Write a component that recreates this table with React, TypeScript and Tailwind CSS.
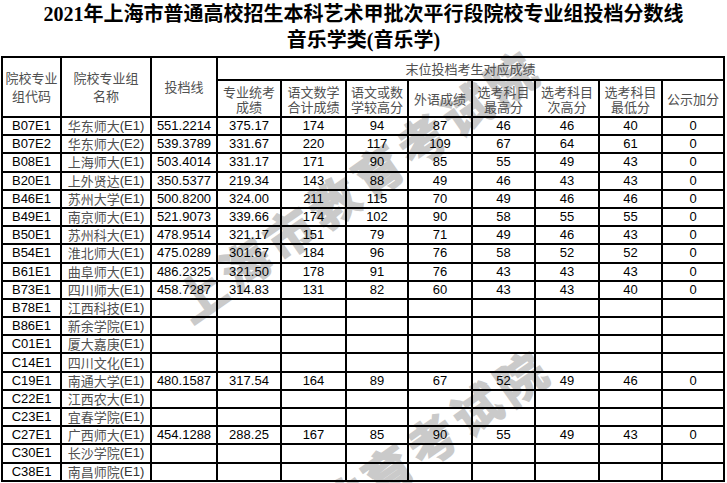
const CJK = '"Noto Sans CJK SC", sans-serif';

type Row = {
  code: string;
  school: string;
  group: string;
  scores?: string[];
};

const rows: Row[] = [
  { code: "B07E1", school: "华东师大", group: "E1", scores: ["551.2214", "375.17", "174", "94", "87", "46", "46", "40", "0"] },
  { code: "B07E2", school: "华东师大", group: "E2", scores: ["539.3789", "331.67", "220", "117", "109", "67", "64", "61", "0"] },
  { code: "B08E1", school: "上海师大", group: "E1", scores: ["503.4014", "331.17", "171", "90", "85", "55", "49", "43", "0"] },
  { code: "B20E1", school: "上外贤达", group: "E1", scores: ["350.5377", "219.34", "143", "88", "49", "46", "43", "43", "0"] },
  { code: "B46E1", school: "苏州大学", group: "E1", scores: ["500.8200", "324.00", "211", "115", "70", "49", "46", "46", "0"] },
  { code: "B49E1", school: "南京师大", group: "E1", scores: ["521.9073", "339.66", "174", "102", "90", "58", "55", "55", "0"] },
  { code: "B50E1", school: "苏州科大", group: "E1", scores: ["478.9514", "321.17", "151", "79", "71", "49", "46", "43", "0"] },
  { code: "B54E1", school: "淮北师大", group: "E1", scores: ["475.0289", "301.67", "184", "96", "76", "58", "52", "52", "0"] },
  { code: "B61E1", school: "曲阜师大", group: "E1", scores: ["486.2325", "321.50", "178", "91", "76", "43", "43", "43", "0"] },
  { code: "B73E1", school: "四川师大", group: "E1", scores: ["458.7287", "314.83", "131", "82", "60", "43", "43", "40", "0"] },
  { code: "B78E1", school: "江西科技", group: "E1" },
  { code: "B86E1", school: "新余学院", group: "E1" },
  { code: "C01E1", school: "厦大嘉庚", group: "E1" },
  { code: "C14E1", school: "四川文化", group: "E1" },
  { code: "C19E1", school: "南通大学", group: "E1", scores: ["480.1587", "317.54", "164", "89", "67", "52", "49", "46", "0"] },
  { code: "C22E1", school: "江西农大", group: "E1" },
  { code: "C23E1", school: "宜春学院", group: "E1" },
  { code: "C27E1", school: "广西师大", group: "E1", scores: ["454.1288", "288.25", "167", "85", "90", "55", "49", "43", "0"] },
  { code: "C30E1", school: "长沙学院", group: "E1" },
  { code: "C38E1", school: "南昌师院", group: "E1" },
];

const subHeads = [
  ["专业统考", "成绩"],
  ["语文数学", "合计成绩"],
  ["语文或数", "学较高分"],
  ["外语成绩"],
  ["选考科目", "最高分"],
  ["选考科目", "次高分"],
  ["选考科目", "最低分"],
  ["公示加分"],
];

function Watermarks() {
  return (
    <>
      <div
        className="absolute left-[180px] top-[283px] origin-[0_50%] rotate-[-35deg] whitespace-nowrap text-[48px] leading-[48px] font-bold tracking-[6px] text-[#cacaca] [-webkit-text-stroke:2px_#cacaca]"
        style={{ fontFamily: CJK }}
      >
        上海市教育考试院
      </div>
      <div
        className="absolute left-[190px] top-[583px] origin-[0_50%] rotate-[-35deg] whitespace-nowrap text-[48px] leading-[48px] font-bold tracking-[6px] text-[#cacaca] [-webkit-text-stroke:2px_#cacaca]"
        style={{ fontFamily: CJK }}
      >
        上海市教育考试院
      </div>
    </>
  );
}

function Cell({ children }: { children?: React.ReactNode }) {
  return <div className="flex h-[14px] items-center justify-center whitespace-nowrap">{children}</div>;
}

export default function App() {
  const cell = "border-2 border-black p-0 text-center align-middle";

  return (
    <div
      className="relative h-[483px] w-[727px] overflow-hidden bg-white text-black"
      style={{ fontFamily: '"Liberation Sans", "Noto Sans CJK SC", sans-serif' }}
    >
      <Watermarks />

      {/* Title */}
      <div
        className="relative pt-[1px] text-center text-[20px] font-bold leading-[26px]"
        style={{ fontFamily: '"Liberation Serif", "Noto Sans CJK SC", serif' }}
      >
        <div>2021年上海市普通高校招生本科艺术甲批次平行段院校专业组投档分数线</div>
        <div>音乐学类(音乐学)</div>
      </div>

      {/* Score table */}
      <table className="relative mt-[3px] ml-[1px] w-[724px] table-fixed border-collapse text-[13px]">
        <colgroup>
          <col className="w-[59px]" />
          <col className="w-[90px]" />
          <col className="w-[66px]" />
          <col className="w-[64px]" />
          <col className="w-[65px]" />
          <col className="w-[62px]" />
          <col className="w-[64px]" />
          <col className="w-[63px]" />
          <col className="w-[64px]" />
          <col className="w-[63px]" />
          <col className="w-[62px]" />
        </colgroup>
        <thead className="text-[#505050]" style={{ fontFamily: CJK }}>
          <tr className="h-[23px]">
            <th rowSpan={2} className={`${cell} font-normal leading-[18px]`}>
              院校专业
              <br />
              组代码
            </th>
            <th rowSpan={2} className={`${cell} font-normal leading-[18px]`}>
              院校专业组
              <br />
              名称
            </th>
            <th rowSpan={2} className={`${cell} font-normal leading-[18px]`}>
              投档线
            </th>
            <th colSpan={8} className={`${cell} font-normal leading-[16px]`}>
              末位投档考生对应成绩
            </th>
          </tr>
          <tr className="h-[37px]">
            {subHeads.map((lines, i) => (
              <th key={i} className={`${cell} font-normal leading-[15px]`}>
                {lines.map((l, j) => (
                  <div key={j}>{l}</div>
                ))}
              </th>
            ))}
          </tr>
        </thead>
        <tbody className="leading-[14px]">
          {rows.map((r) => (
            <tr key={r.code} className="h-[18.2px]">
              <td className={cell}>
                <Cell>{r.code}</Cell>
              </td>
              <td className={cell}>
                <Cell>
                  <span className="text-[#505050]" style={{ fontFamily: CJK }}>
                    {r.school}
                  </span>
                  <span className="text-[#333]">({r.group})</span>
                </Cell>
              </td>
              {Array.from({ length: 9 }).map((_, i) => (
                <td key={i} className={cell}>
                  <Cell>{r.scores ? r.scores[i] : ""}</Cell>
                </td>
              ))}
            </tr>
          ))}
        </tbody>
      </table>
    </div>
  );
}
